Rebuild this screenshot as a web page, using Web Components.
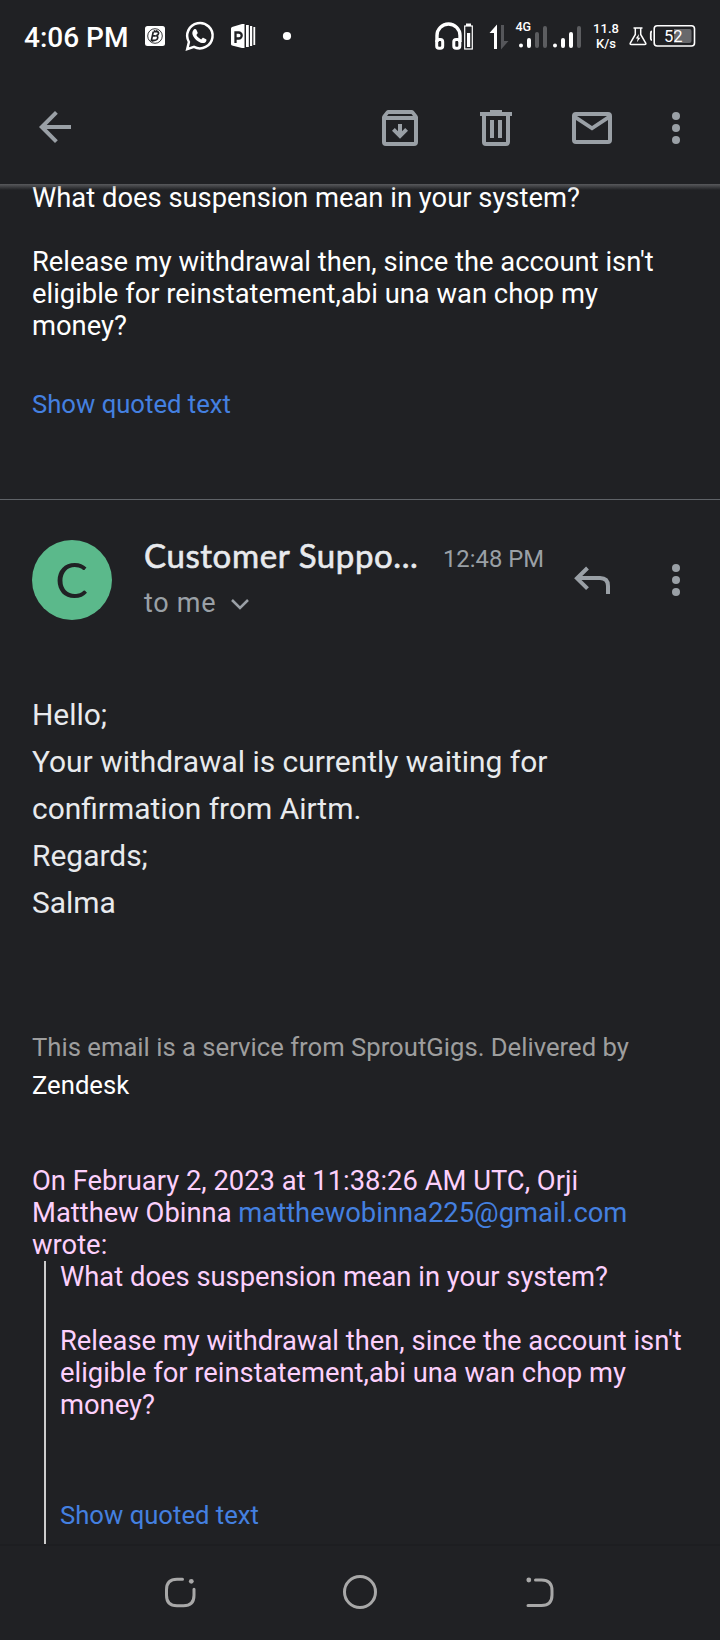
<!DOCTYPE html>
<html lang="en">
<head>
<meta charset="utf-8">
<title>Mail thread</title>
<style>
html,body{margin:0;padding:0;background:#202124}
body{width:720px;height:1640px;overflow:hidden;font-family:Roboto,"Liberation Sans",sans-serif}
</style>
</head>
<body>
<mail-app></mail-app>

<template id="status-bar">
<style>
:host{display:flex;height:72px;color:#fff;line-height:72px;white-space:nowrap}
svg{display:block;flex:none}
.time{box-sizing:border-box;width:135px;padding-left:24px;font-size:28px;font-weight:500;line-height:75px}
.rate{width:36px;margin-right:5px;font-size:13px;font-weight:500;line-height:15px;text-align:center;padding-top:21px;height:51px}
.sig{font:500 12.500px Roboto,sans-serif}
.lvl{font:400 16.500px Roboto,sans-serif}
</style>
<div class="time">4:06 PM</div>
<svg width="165" height="72" viewBox="135 0 165 72">
 <rect x="145" y="26" width="20" height="20" rx="2.5" fill="#fff"/>
 <circle cx="155" cy="36" r="7.3" fill="none" stroke="#202124" stroke-width=".9"/>
 <path d="M153.6 31.6h3.2c2.6 0 2.3 3.5-.6 4 2.600.5 1.800 4.700-1.600 4.700h-3.200l1.900-8.700m-.9 4.200h3.400M154.800 30.200l-.4 1.600m2.600-1.600l-.4 1.600M152.800 40.200l-.4 1.600" fill="none" stroke="#202124" stroke-width="1.700"/>
 <path d="M187.200 49.200l1.700-7.200A12.700 12.700 0 1 1 194 46.900z" fill="none" stroke="#fff" stroke-width="2.500"/>
 <path d="M193.300 30.200c.8-1.500 2.600-1.600 3.100-.5l1.200 2.900c.3.700-.1 1.200-1.200 2.400 1 2 2.700 3.500 4.800 4.400 1.200-1.400 1.600-1.900 2.400-1.500l2.500 1.300c.9.5.2 2.500-.9 3.300-1.700 1.200-4.500.5-7.300-1.300-2.400-1.600-4.600-4.100-5.300-6.500-.5-1.700-.2-3.300.7-4.500z" fill="#fff"/>
 <path d="M231 28.500Q231 27.500 232 27L242 24h2.500v24H242l-10-2.500q-1-.5-1-1.500zM246 25h2.800v22H246zm4 1h2.200v20H250zm3.400 1h1.800v18h-1.800z" fill="#fff"/>
 <path d="M235.500 43V32.500h3.200a2.700 2.700 0 0 1 0 6h-3.200" fill="none" stroke="#202124" stroke-width="2.300"/>
 <circle cx="287" cy="36" r="4.100" fill="#fff"/>
</svg>
<svg width="288" height="72" viewBox="300 0 288 72">
 <path d="M437 42v-6.500a11.500 11.500 0 0 1 23 0V42" fill="none" stroke="#fff" stroke-width="3.400"/>
 <rect x="436.700" y="39.500" width="6" height="8.700" rx="2.300" fill="none" stroke="#fff" stroke-width="3"/>
 <rect x="453.800" y="39.500" width="6" height="8.700" rx="2.300" fill="none" stroke="#fff" stroke-width="3"/>
 <path d="M466 23.500h5V26h-5z" fill="#fff"/><rect x="464.700" y="26" width="7.600" height="23" fill="none" stroke="#fff" stroke-width="1.200"/><path d="M467 33h3.200v14H467z" fill="#fff"/>
 <path d="M497 24.500V49h-3V33h-4.500z" fill="#fff"/><path d="M501 25h3v16h4.500L501 49.500z" fill="#55565a"/>
 <text x="515.500" y="31" class="sig" fill="#fff">4G</text>
 <g stroke-width="4" stroke-linecap="round" stroke="#fff"><path d="M521 45.500v.1M529 40v6M555 45.500v.1M563 40v6M571 34v12"/><path d="M537 34v12M545 28v18M579 28v18" stroke="#5c5d60"/></g>
</svg>
<div class="rate">11.8<br>K/s</div>
<svg width="91" height="72" viewBox="629 0 91 72">
 <path d="M633.500 28h9M635.300 28v6.500l-5 8.500q-.7 1.500 1 1.500h13.400q1.700 0 1-1.500l-5-8.500V28" fill="none" stroke="#fff" stroke-width="1.500"/>
 <path d="M639 34l-3.300 4.600h2l-.8 3.700 3.500-4.600h-2z" fill="#fff"/>
 <path d="M652 31.500q-1.200 0-1.200 1.500v5.500q0 1.500 1.200 1.500" fill="none" stroke="#fff" stroke-width="1.800"/>
 <rect x="654.200" y="25.700" width="40.300" height="20.300" rx="3" fill="none" stroke="#fff" stroke-width="1.600"/>
 <path d="M674 29h15.500q2 0 2 2v10q0 2-2 2H674z" fill="#68696c"/>
 <text x="664" y="42" class="lvl" fill="#fff">52</text>
</svg>
</template>

<template id="tool-bar">
<style>
:host{display:flex;height:112px;align-items:center;color:#9aa0a6;background:#202124}
svg{display:block;flex:none}
.sp{flex:1}
</style>
<svg width="96" height="112" viewBox="0 72 96 112"><path d="M71 125v4H46.700l11.100 11.200-2.800 2.800-16-16 16-16 2.800 2.800L46.700 125z" fill="currentColor"/></svg>
<span class="sp"></span>
<svg width="96" height="112" viewBox="352 72 96 112"><path fill="currentColor" fill-rule="evenodd" d="M388.500 110h23q1.600 0 2.500 1.200l3 3.700q1 1.200 1 2.700V142q0 4-4 4h-28q-4 0-4-4v-24.400q0-1.500 1-2.700l3-3.700q.9-1.200 2.500-1.200zM388.500 114l-1.500 2h26l-1.500-2zM386 120v22h28v-22z"/><path d="M398 124h4v7.200l3.200-3.200 2.800 2.800-8 8-8-8 2.800-2.800 3.200 3.200z" fill="currentColor"/></svg>
<svg width="96" height="112" viewBox="448 72 96 112"><path fill="currentColor" fill-rule="evenodd" d="M480 112h10v-2h12v2h10v4h-2v26q0 4-4 4h-20q-4 0-4-4v-26h-2zM486 116v26h20v-26zM490 120h4v18h-4zm8 0h4v18h-4z"/></svg>
<svg width="96" height="112" viewBox="544 72 96 112"><path fill="currentColor" fill-rule="evenodd" d="M576 112h32q4 0 4 4v24q0 4-4 4h-32q-4 0-4-4v-24q0-4 4-4zM577 116l15 10 15-10zM576 120v20h32v-20l-16 10.500z"/></svg>
<svg width="80" height="112" viewBox="640 72 80 112" fill="currentColor"><circle cx="676" cy="116" r="4"/><circle cx="676" cy="128" r="4"/><circle cx="676" cy="140" r="4"/></svg>
</template>

<template id="message-header">
<style>
:host{display:flex;height:140px;padding:0}
svg{display:block;flex:none}
.av{box-sizing:border-box;width:80px;height:80px;padding-right:1px;border-radius:50%;background:#5bb98b;margin:40px 32px 0 32px;text-align:center;font:400 49px/78px Lato,sans-serif;color:#202124}
.who{width:282px;padding-top:31px;white-space:nowrap}
.name{font:400 33px/48px Lato,sans-serif;color:#e8eaed;letter-spacing:.6px;-webkit-text-stroke:.6px #e8eaed}
.to{display:flex;margin-top:4px;font-size:27px;line-height:40px;color:#9aa0a6;letter-spacing:.7px}
.time{width:120px;padding-left:17px;padding-top:43px;font-size:23.800px;line-height:32px;color:#9aa0a6;white-space:nowrap;box-sizing:border-box}
</style>
<div class="av">C</div>
<div class="who"><div class="name"><slot name="name"></slot></div><div class="to"><span><slot name="to"></slot></span><svg width="40" height="40" viewBox="216 583 40 40"><path d="M232 600l8 8 8-8" fill="none" stroke="#9aa0a6" stroke-width="2.500"/></svg></div></div>
<div class="time"><slot name="time"></slot></div>
<svg width="174" height="140" viewBox="546 500 174 140"><path d="M587.500 568L577 578.300l10.500 10.400M577 578h23q8 0 8 8v8" fill="none" stroke="#9aa0a6" stroke-width="4"/><g fill="#9aa0a6"><circle cx="676" cy="568" r="4"/><circle cx="676" cy="580" r="4"/><circle cx="676" cy="592" r="4"/></g></svg>
</template>

<template id="nav-bar">
<style>
:host{display:flex;height:96px;justify-content:center;background:#202124;box-sizing:border-box;border-top:2px solid #1d1e21}
svg{display:block;margin-top:-2px}
</style>
<svg width="540" height="96" viewBox="90 1544 540 96" fill="none" stroke="#a8a8a8" stroke-width="3" stroke-linecap="round"><path d="M182.500 1579.300H177q-10.500 0-10.500 10.500v5.500q0 10.500 10.500 10.500h6.500q10.500 0 10.500-10.500v-6"/><circle cx="191.300" cy="1581.300" r="2.400" fill="#a8a8a8" stroke="none"/><circle cx="360" cy="1592" r="15.500"/><path d="M535.500 1580h6q10.500 0 10.500 10.500v4.500q0 10.500-10.500 10.500H528"/><circle cx="528.800" cy="1580" r="2.400" fill="#a8a8a8" stroke="none"/></svg>
</template>

<template id="quote-block">
<style>:host{display:flow-root;box-sizing:border-box;margin-left:12px;border-left:2px solid #ccc;padding-left:14px;height:283px}</style>
<slot></slot>
</template>

<template id="mail-app">
<style>
:host{display:flex;flex-direction:column;width:720px;height:1640px;background:#202124}
main{height:1362px;margin-top:-2px;overflow:hidden;position:relative}
.shade{position:absolute;left:0;top:2px;width:720px;height:6px;background:linear-gradient(rgba(112,113,116,.7),rgba(112,113,116,.35) 50%,rgba(112,113,116,0))}
p{margin:0;white-space:nowrap}
.first{padding:0 32px;height:317px;border-bottom:1px solid #5f6368}
.t{font-size:27.370px;line-height:32px;color:#fff}
.pink{color:#fcd0fc}
.link{color:#4480e0}
.sq{font-size:25.660px;line-height:32px}
.hello{font-size:29.950px;line-height:47px;color:#e8eaed}
.foot{font-size:25.660px;line-height:38px;color:#9e9e9e}
.foot b{font-weight:400;color:#fff}
.body{padding:0 32px}
</style>
<status-bar></status-bar>
<tool-bar></tool-bar>
<main>
 <section class="first">
  <p class="t">What does suspension mean in your system?<br><br>Release my withdrawal then, since the account isn't<br>eligible for reinstatement,abi una wan chop my<br>money?</p>
  <p class="sq link" style="margin-top:46px">Show quoted text</p>
 </section>
 <div class="shade"></div>
 <message-header><span slot="name">Customer Suppo...</span><span slot="to">to me</span><span slot="time">12:48 PM</span></message-header>
 <section class="body">
  <p class="hello" style="padding-top:51px">Hello;<br>Your withdrawal is currently waiting for<br>confirmation from Airtm.<br>Regards;<br>Salma</p>
  <p class="foot" style="margin-top:102px">This email is a service from SproutGigs. Delivered by<br><b>Zendesk</b></p>
  <p class="t pink" style="margin-top:61px">On February 2, 2023 at 11:38:26 AM UTC, Orji<br>Matthew Obinna <span class="link">matthewobinna225@gmail.com</span><br>wrote:</p>
  <quote-block>
   <p class="t pink">What does suspension mean in your system?<br><br>Release my withdrawal then, since the account isn't<br>eligible for reinstatement,abi una wan chop my<br>money?</p>
   <p class="sq link" style="margin-top:78px">Show quoted text</p>
  </quote-block>
 </section>
</main>
<nav-bar></nav-bar>
</template>

<script>
for (const name of ['status-bar','tool-bar','message-header','quote-block','nav-bar','mail-app']) {
  customElements.define(name, class extends HTMLElement {
    constructor() {
      super();
      this.attachShadow({mode:'open'}).append(document.getElementById(name).content.cloneNode(true));
    }
  });
}
</script>
</body>
</html>
